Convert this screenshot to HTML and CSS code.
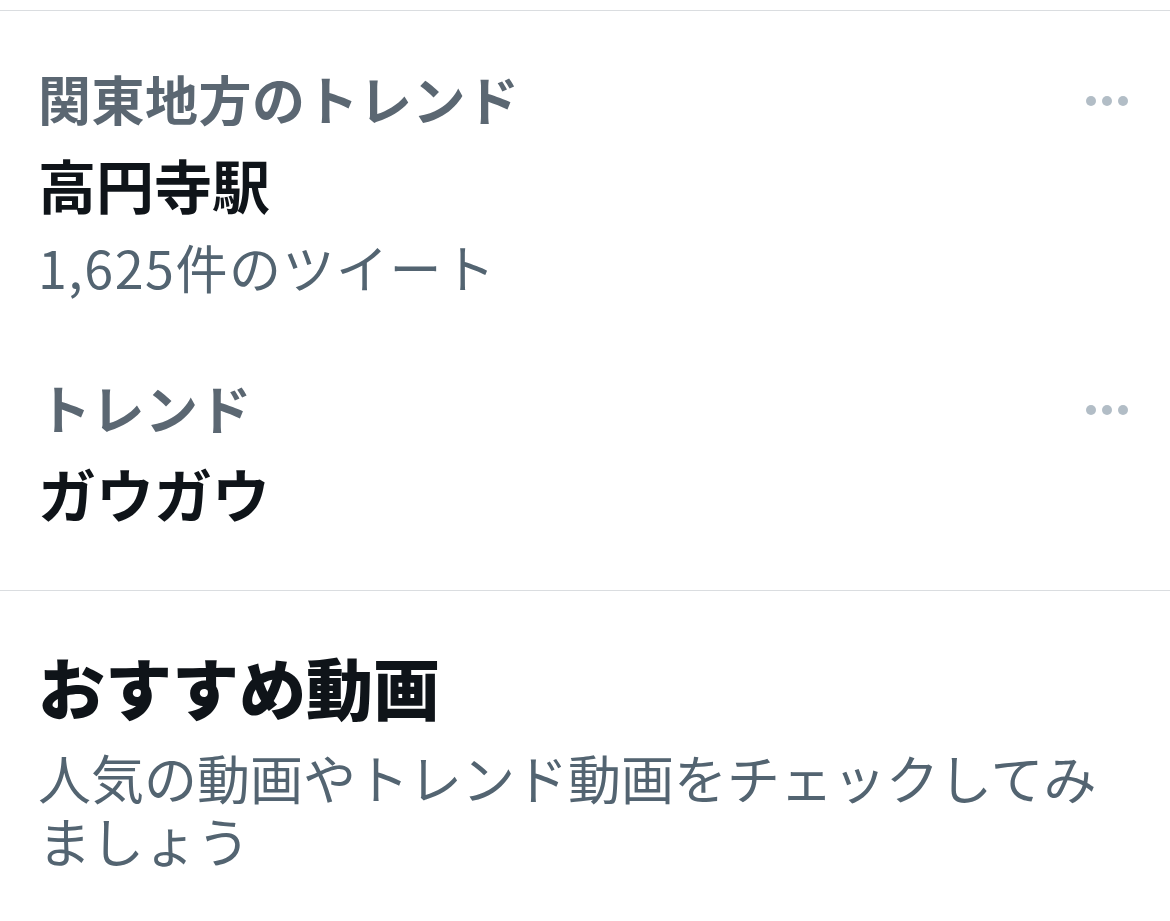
FILE: index.html
```html
<!DOCTYPE html>
<html lang="ja">
<head>
    <meta charset="UTF-8">
    <meta name="viewport" content="width=device-width, initial-scale=1.0">
    <title>話題を検索</title>
    <link rel="stylesheet" href="styles.css">
</head>
<body>
    <div class="trends">
        <div class="trend first">
            <div class="trend-head">
                <div class="trend-label">関東地方のトレンド</div>
                <button class="more" aria-label="その他">
                    <svg width="44" height="12" viewBox="0 0 44 12"><circle cx="5" cy="6" r="5"/><circle cx="21" cy="6" r="5"/><circle cx="37" cy="6" r="5"/></svg>
                </button>
            </div>
            <div class="trend-name">高円寺駅</div>
            <div class="trend-count">1,625件のツイート</div>
        </div>
        <div class="trend second">
            <div class="trend-head">
                <div class="trend-label">トレンド</div>
                <button class="more" aria-label="その他">
                    <svg width="44" height="12" viewBox="0 0 44 12"><circle cx="5" cy="6" r="5"/><circle cx="21" cy="6" r="5"/><circle cx="37" cy="6" r="5"/></svg>
                </button>
            </div>
            <div class="trend-name">ガウガウ</div>
        </div>
    </div>

    <div class="videos">
        <h2 class="videos-title">おすすめ動画</h2>
        <p class="videos-text">人気の動画やトレンド動画をチェックしてみましょう</p>
    </div>
</body>
</html>
```

FILE: styles.css
```css
/* General styles */
* {
    margin: 0;
    padding: 0;
    box-sizing: border-box;
}

body {
    font-family: "Noto Sans CJK JP", "Noto Sans", sans-serif;
    background-color: #fff;
    color: #0f1419;
    padding-top: 10px;
}

/* Trend list */
.trends {
    border-top: 1px solid #dadde0;
    border-bottom: 1px solid #dadde0;
    padding: 0 40px 65px 38px;
}

.trend.first {
    padding-top: 55px;
}

.trend.second {
    padding-top: 76px;
}

.trend-head {
    display: flex;
    justify-content: space-between;
    align-items: center;
}

.trend-label {
    font-size: 53px;
    font-weight: 600;
    letter-spacing: 0.5px;
    line-height: 64px;
    color: #5b6772;
}

.more {
    border: none;
    background: none;
    display: flex;
    margin-top: 6px;
}

.more svg {
    fill: #b2bdc6;
}

.trend-name {
    font-size: 58px;
    font-weight: 700;
    line-height: 64px;
    margin-top: 22px;
}

.trend-count {
    font-size: 52px;
    font-weight: 400;
    letter-spacing: 1.5px;
    line-height: 64px;
    color: #536471;
    margin-top: 19px;
}

/* Recommended videos */
.videos {
    padding: 55px 40px 0 38px;
}

.videos-title {
    font-size: 67px;
    font-weight: 900;
    line-height: 80px;
}

.videos-text {
    font-size: 53px;
    font-weight: 400;
    line-height: 63px;
    color: #536471;
    margin-top: 20px;
}
```
